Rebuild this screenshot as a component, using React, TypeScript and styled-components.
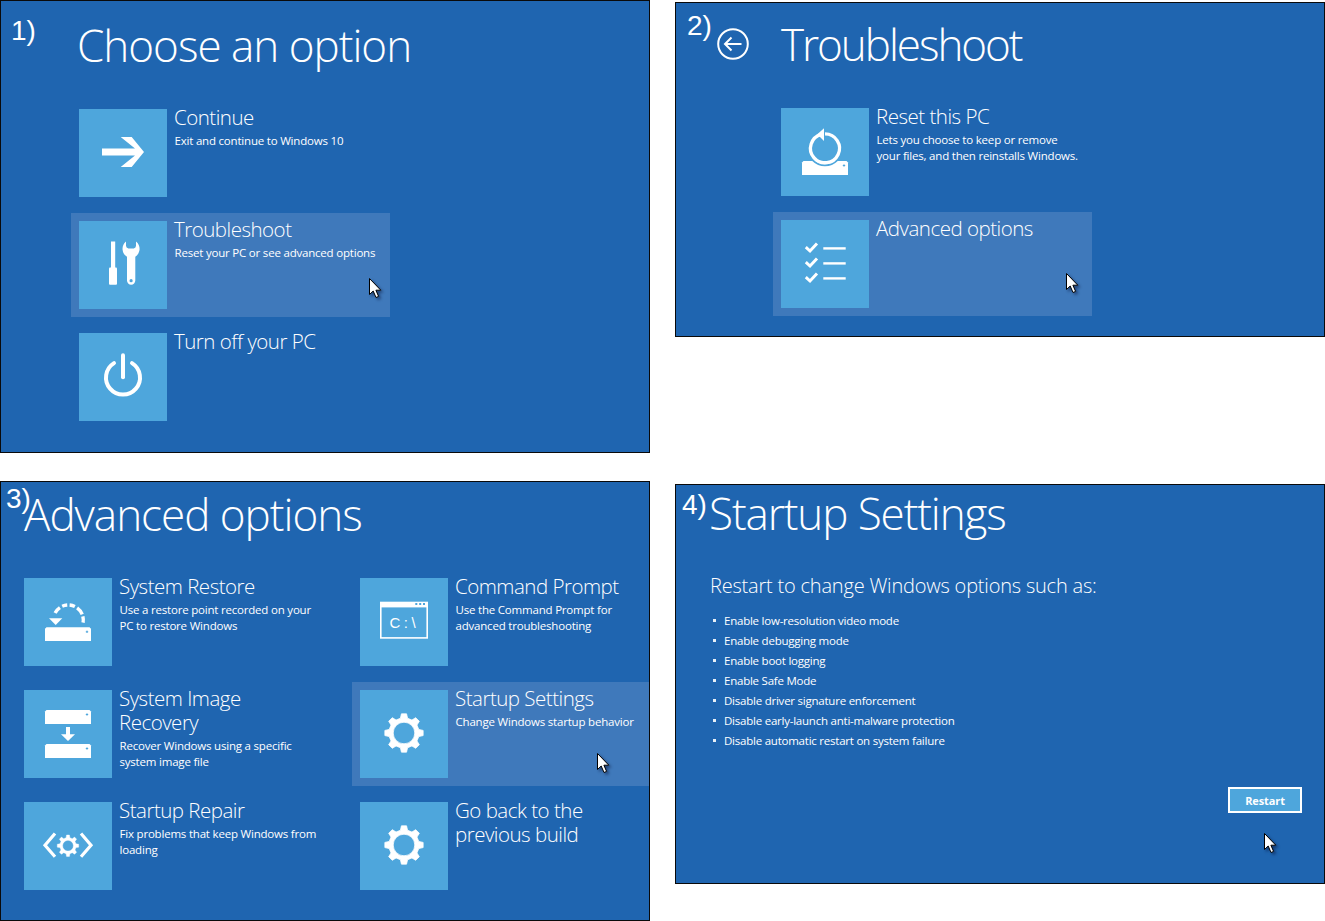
import React from 'react'
import styled, { createGlobalStyle } from 'styled-components'

const BLUE = '#1f65b0'
const TILE = '#4ea6dc'
const HILITE = '#3f79bb'
const UI_FONT = '"Open Sans", "Noto Sans", sans-serif'

const GlobalStyle = createGlobalStyle`
	html, body {
		margin: 0;
		padding: 0;
		background: #fff;
		overflow: hidden;
	}
`

const Page = styled.div`
	width: 1325px;
	height: 921px;
	display: grid;
	grid-template-columns: 650px 650px;
	grid-template-rows: 481px 440px;
	column-gap: 25px;
	font-family: ${UI_FONT};
	color: #fff;
`

const Panel = styled.section<{ $height: number; $top?: number }>`
	position: relative;
	box-sizing: border-box;
	width: 650px;
	height: ${(p) => p.$height}px;
	margin-top: ${(p) => p.$top ?? 0}px;
	background: ${BLUE};
	border: 1px solid #0a0a0a;
	overflow: hidden;
`

const StepLabel = styled.span<{ $x: number; $y: number }>`
	position: absolute;
	left: ${(p) => p.$x}px;
	top: ${(p) => p.$y}px;
	font-family: 'Liberation Sans', Arial, sans-serif;
	font-size: 28px;
	line-height: 32px;
	z-index: 2;
`

const Header = styled.header<{ $height: number; $left: number }>`
	display: flex;
	align-items: flex-start;
	box-sizing: border-box;
	height: ${(p) => p.$height}px;
	padding-left: ${(p) => p.$left}px;
`

const Title = styled.h1<{ $top: number; $tracking?: number }>`
	margin: ${(p) => p.$top}px 0 0;
	font-size: 44px;
	font-weight: 300;
	line-height: 60px;
	letter-spacing: ${(p) => p.$tracking ?? -1}px;
	white-space: nowrap;
`

const BackButton = styled.span`
	display: block;
	width: 32px;
	height: 32px;
	margin: 25px 32px 0 0;
`

const OptionGrid = styled.div<{ $left: number; $rows: number }>`
	display: grid;
	grid-auto-flow: column;
	grid-template-rows: repeat(${(p) => p.$rows}, 104px);
	grid-auto-columns: 319px;
	column-gap: 17px;
	row-gap: 8px;
	margin-left: ${(p) => p.$left}px;
`

const Option = styled.div<{ $active?: boolean }>`
	position: relative;
	display: flex;
	gap: 7px;
	box-sizing: border-box;
	width: 319px;
	height: 104px;
	padding: 8px;
	background: ${(p) => (p.$active ? HILITE : 'transparent')};
`

const Tile = styled.div`
	flex: none;
	width: 88px;
	height: 88px;
	background: ${TILE};

	svg {
		display: block;
	}
`

const OptionText = styled.div`
	min-width: 0;
	margin-top: -4px;
`

const OptionTitle = styled.div`
	font-size: 20.5px;
	font-weight: 300;
	line-height: 24px;
	letter-spacing: -0.5px;
	white-space: pre-line;
`

const OptionDesc = styled.div`
	margin: 4px 0 0 0.5px;
	font-size: 11.5px;
	line-height: 16px;
	letter-spacing: -0.2px;
	white-space: pre-line;
`

const Pointer = styled.svg<{ $x: number; $y: number }>`
	position: absolute;
	left: ${(p) => p.$x}px;
	top: ${(p) => p.$y}px;
	width: 18px;
	height: 24px;
	filter: drop-shadow(2px 2px 1.5px rgba(0, 0, 30, 0.45));
	overflow: visible;
`

const SettingsBody = styled.div`
	padding-left: 34px;
`

const Lead = styled.p`
	margin: 0;
	font-size: 20px;
	font-weight: 300;
	line-height: 26px;
	letter-spacing: -0.2px;
`

const BulletList = styled.ul`
	margin: 11px 0 0;
	padding: 0;
	list-style: none;
`

const Bullet = styled.li`
	display: flex;
	align-items: center;
	gap: 8px;
	height: 20px;
	padding-left: 3px;
	font-size: 11.5px;
	letter-spacing: -0.23px;

	&::before {
		content: '';
		width: 3px;
		height: 3px;
		background: #e8f0f8;
	}
`

const ButtonRow = styled.div`
	display: flex;
	justify-content: flex-end;
	margin: 37px 22px 0 0;
`

const RestartButton = styled.button`
	box-sizing: border-box;
	width: 74px;
	height: 26px;
	padding: 0;
	background: ${TILE};
	border: 2px solid #fff;
	color: #fff;
	font-family: ${UI_FONT};
	font-size: 11px;
	font-weight: 700;
	letter-spacing: -0.1px;
`

// angle is clockwise from 12 o'clock
const polar = (cx: number, cy: number, r: number, deg: number) => {
	const a = (deg * Math.PI) / 180
	return `${(cx + r * Math.sin(a)).toFixed(2)} ${(cy - r * Math.cos(a)).toFixed(2)}`
}

const arc = (cx: number, cy: number, r: number, from: number, to: number) =>
	`M${polar(cx, cy, r, from)} A${r} ${r} 0 ${to - from > 180 ? 1 : 0} 1 ${polar(cx, cy, r, to)}`

const gearPath = (cx: number, cy: number, outer: number, root: number, hole: number) => {
	const step = 360 / 8
	let d = ''
	for (let i = 0; i < 8; i++) {
		const a = i * step
		d += `${i === 0 ? 'M' : 'L'}${polar(cx, cy, root, a - step * 0.3)} `
		d += `L${polar(cx, cy, outer, a - step * 0.17)} L${polar(cx, cy, outer, a + step * 0.17)} `
		d += `L${polar(cx, cy, root, a + step * 0.3)} `
	}
	d += `Z M${cx - hole} ${cy} A${hole} ${hole} 0 1 0 ${cx + hole} ${cy} A${hole} ${hole} 0 1 0 ${cx - hole} ${cy} Z`
	return d
}

const IconSvg: React.FC<{ children: React.ReactNode }> = ({ children }) => (
	<svg width="88" height="88" viewBox="0 0 88 88" fill="#fff">
		{children}
	</svg>
)

const Disk: React.FC<{ y: number; h?: number }> = ({ y, h = 14 }) => (
	<>
		<path d={`M22.5 ${y} H65.5 L67 ${y + 1.5} V${y + h} H21 V${y + 1.5} Z`} />
		<path d={`M61.8 ${y + 4.5} h2.4 M63 ${y + 3.3} v2.4`} stroke={TILE} strokeWidth="1" />
	</>
)

const ArrowIcon = () => (
	<IconSvg>
		<path d="M23 39.6 H56 L41.7 28 H52.7 L65 43 L52.7 58 H41.7 L56 46.4 H23 Z" />
	</IconSvg>
)

const ToolsIcon = () => (
	<IconSvg>
		<rect x="32" y="20.5" width="4.2" height="28" />
		<rect x="30" y="46.5" width="8" height="17.2" rx="1" />
		<path d="M47 20.5 A9.4 9.4 0 0 0 48 35.8 V59.6 A4.15 4.15 0 0 0 56.3 59.6 V35.8 A9.4 9.4 0 0 0 57 20.5 V24.8 A2.8 2.8 0 0 1 54.8 27.5 H49.4 A2.8 2.8 0 0 1 47 24.8 Z" />
		<circle cx="52.1" cy="59.7" r="1.6" fill={TILE} />
	</IconSvg>
)

const PowerIcon = () => (
	<IconSvg>
		<path d={arc(44, 44.5, 17, 32, 328)} fill="none" stroke="#fff" strokeWidth="4" strokeLinecap="round" />
		<path d="M44 22.3 V44.3" fill="none" stroke="#fff" strokeWidth="4" strokeLinecap="round" />
	</IconSvg>
)

const ResetIcon = () => (
	<IconSvg>
		<Disk y={53} />
		<circle cx="44" cy="40.3" r="17" fill="none" stroke={TILE} strokeWidth="2" />
		<path d={arc(44, 40.3, 14.5, 0, 345)} fill="none" stroke="#fff" strokeWidth="3.3" />
		<path d="M36.3 26.3 L43 20.3 V33 Z" />
	</IconSvg>
)

const ChecklistIcon = () => (
	<IconSvg>
		{[0, 15, 30].map((dy) => (
			<g key={dy} transform={`translate(0 ${dy})`} fill="none" stroke="#fff">
				<path d="M24.8 27.2 L29 31 L36 23.5" strokeWidth="3" />
				<path d="M42.3 28.4 H64.7" strokeWidth="2.4" />
			</g>
		))}
	</IconSvg>
)

const RestoreIcon = () => (
	<IconSvg>
		<Disk y={49.3} h={13.7} />
		{[
			[-62, -34],
			[-24, -4],
			[5, 26],
			[36, 68],
			[76, 100],
		].map(([from, to]) => (
			<path key={from} d={arc(44.3, 42, 15, from, to)} fill="none" stroke="#fff" strokeWidth="3.4" />
		))}
		<path d="M25 40.3 H38.3 L31.7 47 Z" />
	</IconSvg>
)

const ImageIcon = () => (
	<IconSvg>
		<Disk y={20} />
		<rect x="42" y="37" width="4" height="8" />
		<path d="M37 44.3 H51 L44 51 Z" />
		<Disk y={54} />
	</IconSvg>
)

const RepairIcon = () => (
	<IconSvg>
		<path d={gearPath(44, 43.7, 10.8, 8.2, 5.4)} fillRule="evenodd" stroke="#fff" strokeWidth="0.4" strokeLinejoin="round" />
		<path d="M31 31.5 L21 43.2 L31 54.8 M57 31.5 L67 43.2 L57 54.8" fill="none" stroke="#fff" strokeWidth="3.2" />
	</IconSvg>
)

const CommandIcon = () => (
	<IconSvg>
		<rect x="20.8" y="24.5" width="46.4" height="35.4" fill="none" stroke="#fff" strokeWidth="1.6" />
		<rect x="20" y="24" width="48" height="5.4" />
		{[56.3, 60.2, 64].map((x) => (
			<rect key={x} x={x - 1} y="25" width="2" height="2" fill={TILE} />
		))}
		<text x="29.5" y="50.3" fontFamily="'Liberation Sans', sans-serif" fontSize="15" letterSpacing="3.5">
			C:\
		</text>
	</IconSvg>
)

const GearIcon = () => (
	<IconSvg>
		<path d={gearPath(44, 43, 19.3, 15.2, 10.8)} fillRule="evenodd" stroke="#fff" strokeWidth="0.8" strokeLinejoin="round" />
	</IconSvg>
)

const Cursor: React.FC<{ x: number; y: number }> = ({ x, y }) => (
	<Pointer $x={x} $y={y} viewBox="0 0 18 24">
		<path
			d="M0.5 0.5 V16.5 L4.2 13 L7 19.5 L9.6 18.4 L6.9 12.2 L11.8 12.2 Z"
			fill="#fff"
			stroke="#000"
			strokeWidth="1"
		/>
	</Pointer>
)

interface OptionItemProps {
	icon: React.ReactNode
	title: string
	desc?: string
	active?: boolean
	children?: React.ReactNode
}

const OptionItem: React.FC<OptionItemProps> = ({ icon, title, desc, active, children }) => (
	<Option $active={active}>
		<Tile>{icon}</Tile>
		<OptionText>
			<OptionTitle>{title}</OptionTitle>
			{desc && <OptionDesc>{desc}</OptionDesc>}
		</OptionText>
		{children}
	</Option>
)

const bullets = [
	'Enable low-resolution video mode',
	'Enable debugging mode',
	'Enable boot logging',
	'Enable Safe Mode',
	'Disable driver signature enforcement',
	'Disable early-launch anti-malware protection',
	'Disable automatic restart on system failure',
]

export default function App() {
	return (
		<Page>
			<GlobalStyle />

			<Panel $height={453}>
				<StepLabel $x={10} $y={14}>1)</StepLabel>
				<Header $height={100} $left={76}>
					<Title $top={14}>Choose an option</Title>
				</Header>
				<OptionGrid $left={70} $rows={3}>
					<OptionItem icon={<ArrowIcon />} title="Continue" desc="Exit and continue to Windows 10" />
					<OptionItem icon={<ToolsIcon />} title="Troubleshoot" desc="Reset your PC or see advanced options" active>
						<Cursor x={298} y={65} />
					</OptionItem>
					<OptionItem icon={<PowerIcon />} title="Turn off your PC" />
				</OptionGrid>
			</Panel>

			<Panel $height={335} $top={2}>
				<StepLabel $x={11} $y={7}>2)</StepLabel>
				<Header $height={97} $left={41}>
					<BackButton>
						<svg width="32" height="32" viewBox="0 0 32 32" fill="none" stroke="#fff">
							<circle cx="16" cy="16" r="14.8" strokeWidth="2" />
							<path d="M24.5 16 H8 M14.5 9.5 L8 16 L14.5 22.5" strokeWidth="2" />
						</svg>
					</BackButton>
					<Title $top={11} $tracking={-2.05}>Troubleshoot</Title>
				</Header>
				<OptionGrid $left={97} $rows={2}>
					<OptionItem
						icon={<ResetIcon />}
						title="Reset this PC"
						desc={'Lets you choose to keep or remove\nyour files, and then reinstalls Windows.'}
					/>
					<OptionItem icon={<ChecklistIcon />} title="Advanced options" active>
						<Cursor x={293} y={61} />
					</OptionItem>
				</OptionGrid>
			</Panel>

			<Panel $height={440}>
				<StepLabel $x={5} $y={1}>3)</StepLabel>
				<Header $height={88} $left={23}>
					<Title $top={2}>Advanced options</Title>
				</Header>
				<OptionGrid $left={15} $rows={3}>
					<OptionItem
						icon={<RestoreIcon />}
						title="System Restore"
						desc={'Use a restore point recorded on your\nPC to restore Windows'}
					/>
					<OptionItem
						icon={<ImageIcon />}
						title={'System Image\nRecovery'}
						desc={'Recover Windows using a specific\nsystem image file'}
					/>
					<OptionItem
						icon={<RepairIcon />}
						title="Startup Repair"
						desc={'Fix problems that keep Windows from\nloading'}
					/>
					<OptionItem
						icon={<CommandIcon />}
						title="Command Prompt"
						desc={'Use the Command Prompt for\nadvanced troubleshooting'}
					/>
					<OptionItem icon={<GearIcon />} title="Startup Settings" desc="Change Windows startup behavior" active>
						<Cursor x={245} y={71} />
					</OptionItem>
					<OptionItem icon={<GearIcon />} title={'Go back to the\nprevious build'} />
				</OptionGrid>
			</Panel>

			<Panel $height={400} $top={3}>
				<StepLabel $x={6} $y={4}>4)</StepLabel>
				<Header $height={88} $left={33}>
					<Title $top={-2} $tracking={-1.1}>Startup Settings</Title>
				</Header>
				<SettingsBody>
					<Lead>Restart to change Windows options such as:</Lead>
					<BulletList>
						{bullets.map((text) => (
							<Bullet key={text}>{text}</Bullet>
						))}
					</BulletList>
					<ButtonRow>
						<RestartButton>Restart</RestartButton>
					</ButtonRow>
				</SettingsBody>
				<Cursor x={588} y={348} />
			</Panel>
		</Page>
	)
}
